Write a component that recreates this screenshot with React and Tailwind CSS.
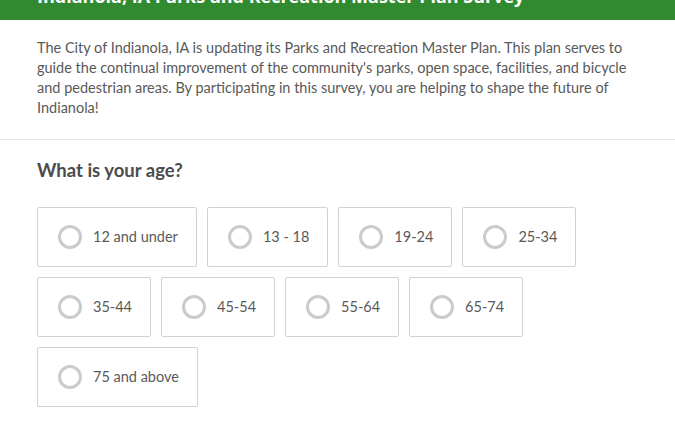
import React from 'react';

const ages = ['12 and under', '13 - 18', '19-24', '25-34', '35-44', '45-54', '55-64', '65-74', '75 and above'];

const Option = ({ label }) => (
    <label className="flex items-center h-[60px] pl-[20px] pr-[18px] border border-[#d2d2d2] rounded-[2px] bg-white cursor-pointer">
        <span className="w-[24px] h-[24px] rounded-full border-[3px] border-[#cbcbcb] shrink-0" />
        <span className="ml-[11px] text-[14.5px] text-[#595959]">{label}</span>
    </label>
);

const App = () => {
    return (
        <div className="w-[675px] h-[436px] bg-white overflow-hidden" style={{ fontFamily: 'Lato, "Open Sans", sans-serif' }}>
            {/* Survey header, scrolled so only the bottom of the title shows */}
            <div className="h-[20px] bg-[#328a30] overflow-hidden px-[37px]">
                <h1 className="text-white font-bold text-[18px] leading-[20px] mt-[-14px] whitespace-nowrap" style={{ fontFamily: '"Open Sans", sans-serif' }}>
                    Indianola, IA Parks and Recreation Master Plan Survey
                </h1>
            </div>

            <div className="px-[37px] pt-[18px] pb-[21px] border-b border-[#e6e6e6]">
                <p className="text-[14.5px] leading-[20px] text-[#595959]">
                    The City of Indianola, IA is updating its Parks and Recreation Master Plan. This plan serves to guide the continual improvement of the community's parks, open space, facilities, and bicycle and pedestrian areas. By participating in this survey, you are helping to shape the future of Indianola!
                </p>
            </div>

            <div className="px-[37px] pt-[18px]">
                <h2 className="text-[18.5px] leading-[24px] font-bold text-[#4c4c4c]">What is your age?</h2>
                <div className="flex flex-wrap gap-[10px] mt-[25px] w-[560px]">
                    {ages.map((a) => (
                        <Option key={a} label={a} />
                    ))}
                </div>
            </div>
        </div>
    );
};

export default App;
